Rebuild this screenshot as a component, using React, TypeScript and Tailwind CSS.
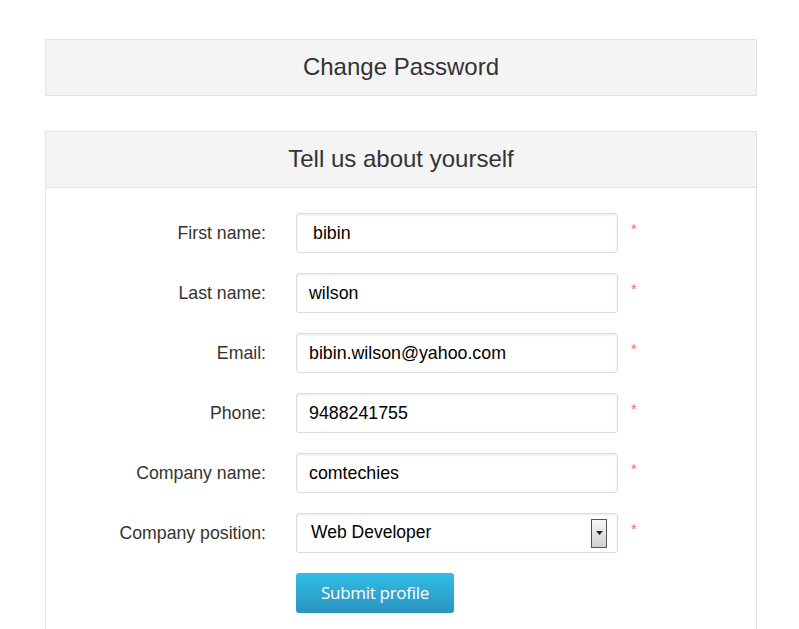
import React from "react"

const FIELDS = [
  { label: "First name:", value: "bibin", pad: "pl-4" },
  { label: "Last name:", value: "wilson", pad: "pl-3" },
  { label: "Email:", value: "bibin.wilson@yahoo.com", pad: "pl-3" },
  { label: "Phone:", value: "9488241755", pad: "pl-3" },
  { label: "Company name:", value: "comtechies", pad: "pl-3" },
]

export default function App() {
  return (
    <div className="min-h-screen bg-white pt-[39px] px-[45px] pr-[42px] font-['Liberation_Sans',Arial,sans-serif] text-[#333]">
      {/* Change password panel */}
      <div className="h-[57px] border border-[#e3e3e3] bg-[#f4f4f4] flex items-center justify-center">
        <h2 className="text-[24px] text-[#333] -mt-[2px]">Change Password</h2>
      </div>

      {/* Profile panel */}
      <div className="mt-[35px] border border-[#e3e3e3] border-b-0">
        <div className="h-[56px] bg-[#f4f4f4] border-b border-[#e3e3e3] flex items-center justify-center">
          <h2 className="text-[24px] text-[#333] -mt-[2px]">Tell us about yourself</h2>
        </div>

        <div className="pt-[25px] pb-6 flex flex-col gap-5">
          {FIELDS.map(f => (
            <div key={f.label} className="flex items-center h-[40px]">
              <label className="w-[220px] text-right text-[17.7px] text-[#333]">{f.label}</label>
              <div className="ml-[30px] w-[322px] h-[40px] rounded-[3px] border border-[#dcdcdc] bg-white shadow-[inset_0_1px_3px_rgba(0,0,0,0.08)] flex items-center">
                <span className={`${f.pad} text-[17.8px] text-black`}>{f.value}</span>
              </div>
              <span className="ml-[13px] self-start mt-[5px] text-[15px] text-[#e57373]">*</span>
            </div>
          ))}

          <div className="flex items-center h-[40px]">
            <label className="w-[220px] text-right text-[17.7px] text-[#333]">Company position:</label>
            <div className="ml-[30px] w-[322px] h-[40px] rounded-[3px] border border-[#dcdcdc] bg-white shadow-[inset_0_1px_3px_rgba(0,0,0,0.08)] flex items-center justify-between pl-[14px] pr-[10px]">
              <span className="text-black text-[17.5px] -mt-[2px]">Web Developer</span>
              <div className="w-[16px] h-[29px] border border-[#555] bg-gradient-to-b from-[#f7f7f7] to-[#cfcfcf] flex items-center justify-center">
                <svg width="7" height="4" viewBox="0 0 7 4"><path d="M0 0h7L3.5 4z" fill="#222" /></svg>
              </div>
            </div>
            <span className="ml-[13px] self-start mt-[5px] text-[15px] text-[#e57373]">*</span>
          </div>

          <div className="flex">
            <button className="ml-[250px] w-[158px] h-[40px] rounded-[3px] bg-gradient-to-b from-[#31bde6] to-[#2a94c0] text-white text-[17px] font-['Open_Sans',sans-serif] tracking-[-0.3px]">
              Submit profile
            </button>
          </div>
        </div>
      </div>
    </div>
  )
}
